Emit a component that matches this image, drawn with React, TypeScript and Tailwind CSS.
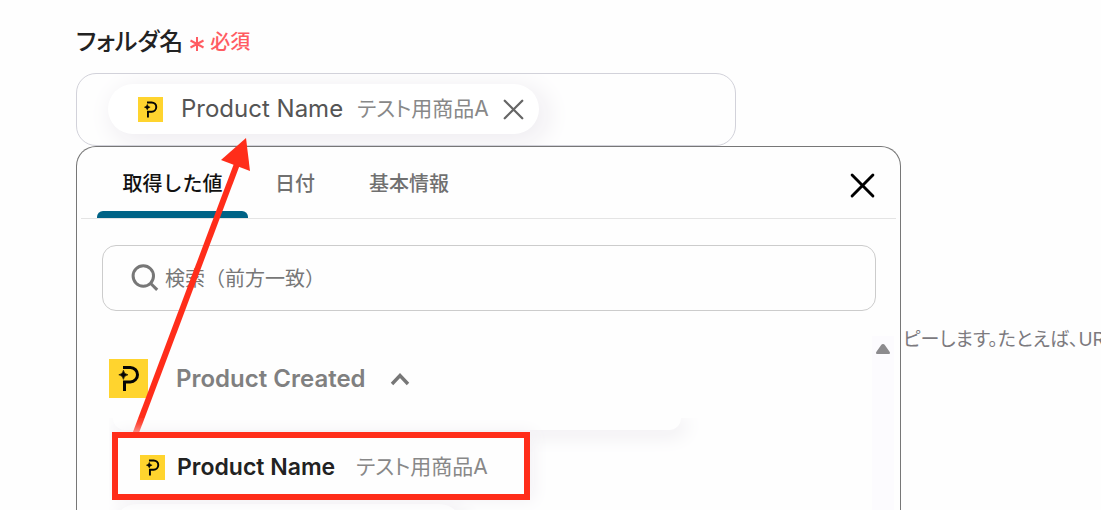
import type { SVGProps } from "react";

const tabs = ["取得した値", "日付", "基本情報"];

function Logo(props: SVGProps<SVGSVGElement>) {
  return (
    <svg viewBox="0 0 39 39" aria-hidden="true" {...props}>
      <path fill="#ffd42e" d="M0 0h39v39H0z" />
      <path
        fill="none"
        stroke="#050505"
        strokeWidth="3"
        d="M14 8.5h7.3a7.2 7.2 0 0 1 0 14.4h-5.8V32"
      />
      <path
        fill="#050505"
        d="M14.4 11.2Q15 15.2 19 15.8Q15 16.4 14.4 20.4Q13.8 16.4 9.8 15.8Q13.8 15.2 14.4 11.2z"
        stroke="#050505"
        strokeWidth="0.6"
      />
    </svg>
  );
}

function Cross(props: SVGProps<SVGSVGElement>) {
  return (
    <svg viewBox="0 0 24 24" fill="none" stroke="currentColor" strokeLinecap="round" aria-hidden="true" {...props}>
      <path d="M2 2l20 20M22 2L2 22" />
    </svg>
  );
}

export default function App() {
  return (
    <main
      className="relative h-screen overflow-hidden bg-[#fefefe] pt-6 pl-[76px] text-[#777]"
      style={{ fontFamily: 'Inter, "Noto Sans CJK JP", sans-serif' }}
    >
      <div className="flex h-9 items-center leading-9">
        <h2 className="text-2xl font-medium text-[#222] [font-feature-settings:'palt']">フォルダ名</h2>
        <span className="ml-[6px] flex items-center gap-[5px] text-xl font-medium text-[#ff5c62]">
          <svg viewBox="0 0 16 16" className="mt-1 size-4" fill="none" stroke="currentColor" strokeWidth="2" aria-hidden="true">
            <path d="M8 1v14M1.5 4.5l13 7M14.5 4.5l-13 7" />
          </svg>
          必須
        </span>
      </div>

      <div className="mt-[13px] flex h-[73px] max-w-[660px] items-start overflow-hidden rounded-[20px] border border-[#d2d2da] pt-[10px] pl-[31px]">
        <div className="flex h-[50px] items-center rounded-full bg-white pr-[9px] pl-[30px] shadow-[6px_6px_24px_4px_#f0eef2]">
          <Logo className="size-[25px]" />
          <span className="ml-[18px] text-2xl text-[#555]">Product Name</span>
          <span className="ml-[14px] text-[21px] text-[#888] [font-feature-settings:'palt']">テスト用商品A</span>
          <button type="button" aria-label="削除" className="ml-[9px] flex size-8 items-center justify-center text-[#666]">
            <Cross className="size-[21px]" strokeWidth="2.6" />
          </button>
        </div>
      </div>

      <div className="flex items-start">
        <section className="w-[825px] shrink-0 rounded-t-[20px] border border-b-0 border-[#777] bg-[#fefefe]">
          <div className="mx-1 flex h-[72px] items-stretch border-b border-[#e4e4e4] pr-[21px] pl-4">
            <div role="tablist" className="flex flex-1">
              {tabs.map((tab, i) => (
                <button
                  key={tab}
                  type="button"
                  role="tab"
                  aria-selected={i === 0}
                  className={
                    i === 0
                      ? "relative w-[151px] pt-[3px] text-xl font-medium text-[#111]"
                      : "px-[27px] pt-[3px] text-xl font-medium text-[#707070]"
                  }
                >
                  {tab}
                  {i === 0 && <span className="absolute inset-x-0 bottom-0 h-[7px] rounded-t-md bg-[#006386]" />}
                </button>
              ))}
            </div>
            <button type="button" aria-label="閉じる" className="flex items-center pt-[5px] text-black">
              <Cross className="size-[25px]" strokeWidth="2.8" />
            </button>
          </div>

          <label className="mr-6 ml-[25px] mt-[26px] flex h-[66px] items-center gap-1.5 rounded-[14px] border border-[#ccc] pl-7">
            <svg viewBox="0 0 28 28" className="size-7" fill="none" stroke="#777" strokeWidth="3" aria-hidden="true">
              <circle cx="12.3" cy="12" r="10.2" />
              <path d="M19.5 19.2l6.7 6.7" />
            </svg>
            <input
              aria-label="検索"
              placeholder="検索（前方一致）"
              className="min-w-0 flex-1 bg-transparent pt-0.5 text-xl outline-none placeholder:text-[#777]"
            />
          </label>

          <div className="mt-[25px] flex h-[174px] pr-1.5">
            <div className="flex-1 pl-8">
              <button type="button" className="mt-[23px] flex h-[39px] items-center text-2xl font-semibold text-[#808080]">
                <Logo className="size-[39px]" />
                <span className="ml-7">Product Created</span>
                <svg viewBox="0 0 20 14" className="ml-6 h-[14px] w-5" fill="none" stroke="#777" strokeWidth="3.4" aria-hidden="true">
                  <path d="M2 12l8-8.5 8 8.5" />
                </svg>
              </button>
              <div className="mt-5 h-[92px] overflow-hidden">
                <div className="ml-1 h-3 w-[568px] rounded-b-[24px] bg-[#fefefe] shadow-[4px_4px_20px_2px_#eeecf0]" />
                <button
                  type="button"
                  className="relative z-10 mt-0.5 ml-[3px] flex h-[68px] w-[418px] items-center border-[6px] border-[#ff2d1a] bg-[#fefefe] pt-0.5 pl-[22px] shadow-[4px_0_16px_0_#f3f1f5]"
                >
                  <Logo className="size-[25px]" />
                  <span className="ml-3 text-[23px] font-semibold text-[#222]">Product Name</span>
                  <span className="ml-[21px] text-[21px] text-[#888] [font-feature-settings:'palt']">テスト用商品A</span>
                </button>
                <div className="mt-1 ml-1 h-12 w-[350px] rounded-[24px] bg-[#fefefe] shadow-[4px_4px_20px_2px_#eeecf0]" />
              </div>
            </div>
            <div className="flex w-[22px] justify-center bg-[#fcfbfe] pt-2">
              <svg viewBox="0 0 14 10" className="h-[10px] w-[14px]" aria-hidden="true">
                <path fill="#8c8b8e" d="M0 9q0-.7.6-1.4L5 1.2Q5.8 0 7 0t2 1.2l4.4 6.4q.6.7.6 1.4 0 1-1 1H1q-1 0-1-1z" />
              </svg>
            </div>
          </div>
        </section>
        <p className="min-w-0 flex-1 overflow-hidden pt-[179px] pl-0.5 text-[19px] leading-[30px] whitespace-nowrap text-[#7c7a7e] [font-feature-settings:'palt']">
          ピーします。たとえば、UR
        </p>
      </div>

      <svg viewBox="0 0 120 300" className="pointer-events-none absolute top-[136px] left-[132px] h-[300px] w-[120px]" aria-hidden="true">
        <path d="M3 299L105 28" stroke="#ff2d1a" strokeWidth="6" />
        <path d="M114 2L118 35L89 24z" fill="#ff2d1a" />
      </svg>
    </main>
  );
}
